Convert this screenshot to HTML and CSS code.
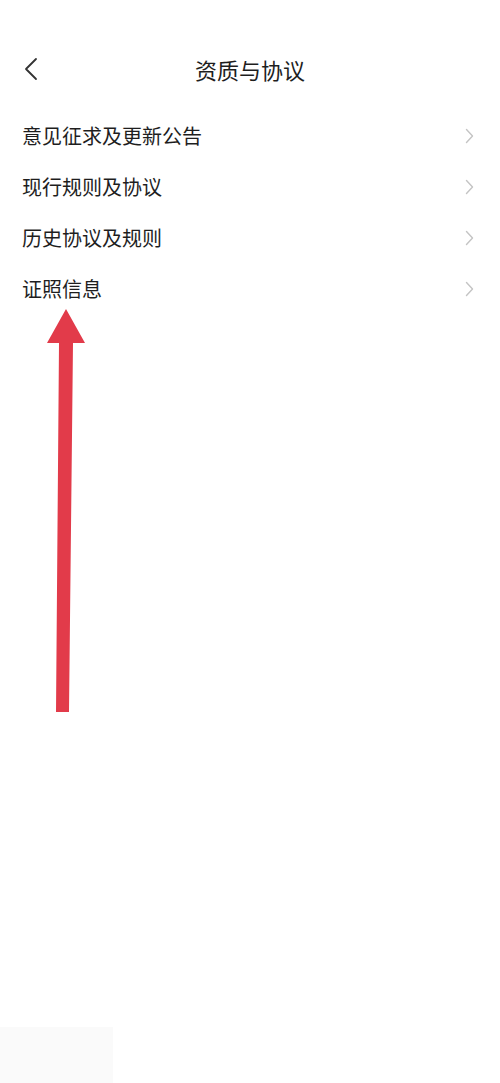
FILE: index.html
```html
<!DOCTYPE html>
<html lang="zh">
<head>
<meta charset="utf-8">
<link rel="stylesheet" href="styles.css">
</head>
<body>
<div class="page">
  <header class="header">
    <span class="back">
      <svg width="14" height="24" viewBox="0 0 14 24"><path d="M12 2 L2 12 L12 22" fill="none" stroke="#333" stroke-width="1.8" stroke-linecap="round" stroke-linejoin="round"/></svg>
    </span>
    <h1 class="title">资质与协议</h1>
  </header>
  <ul class="list">
    <li class="row"><span class="label">意见征求及更新公告</span><svg class="chev" width="9" height="16" viewBox="0 0 9 16"><path d="M1.5 1.5 L7.5 8 L1.5 14.5" fill="none" stroke="#c4c4c4" stroke-width="1.4" stroke-linecap="round" stroke-linejoin="round"/></svg></li>
    <li class="row"><span class="label">现行规则及协议</span><svg class="chev" width="9" height="16" viewBox="0 0 9 16"><path d="M1.5 1.5 L7.5 8 L1.5 14.5" fill="none" stroke="#c4c4c4" stroke-width="1.4" stroke-linecap="round" stroke-linejoin="round"/></svg></li>
    <li class="row"><span class="label">历史协议及规则</span><svg class="chev" width="9" height="16" viewBox="0 0 9 16"><path d="M1.5 1.5 L7.5 8 L1.5 14.5" fill="none" stroke="#c4c4c4" stroke-width="1.4" stroke-linecap="round" stroke-linejoin="round"/></svg></li>
    <li class="row"><span class="label">证照信息</span><svg class="chev" width="9" height="16" viewBox="0 0 9 16"><path d="M1.5 1.5 L7.5 8 L1.5 14.5" fill="none" stroke="#c4c4c4" stroke-width="1.4" stroke-linecap="round" stroke-linejoin="round"/></svg></li>
  </ul>
  <svg class="arrow" width="500" height="720" viewBox="0 0 500 720">
    <polygon points="66,309 85,343 73,343 69,712 56,712 59,343 47,343" fill="#e23b4a"/>
  </svg>
  <div class="corner"></div>
</div>
</body>
</html>
```

FILE: styles.css
```css
html, body {
  margin: 0;
  padding: 0;
  background: #ffffff;
}
.page {
  position: relative;
  width: 500px;
  height: 1083px;
  overflow: hidden;
  font-family: "Noto Sans CJK SC", "Noto Sans", sans-serif;
  color: #222222;
}
.header {
  margin-top: 43px;
  height: 52px;
  display: flex;
  align-items: center;
  justify-content: center;
  position: relative;
}
.back {
  position: absolute;
  left: 24px;
  top: 14px;
  display: flex;
}
.title {
  margin: 0;
  font-size: 22px;
  font-weight: 400;
  color: #1e1e1e;
}
.list {
  list-style: none;
  margin: 15px 0 0 0;
  padding: 0;
}
.row {
  height: 51px;
  display: flex;
  align-items: center;
  justify-content: space-between;
  padding: 0 26px 0 22px;
}
.label {
  font-size: 20px;
  color: #1e1e1e;
  line-height: 1;
}
.arrow {
  position: absolute;
  left: 0;
  top: 0;
}
.corner {
  position: absolute;
  left: 0;
  bottom: 0;
  width: 113px;
  height: 56px;
  background: #fafafa;
}
```
